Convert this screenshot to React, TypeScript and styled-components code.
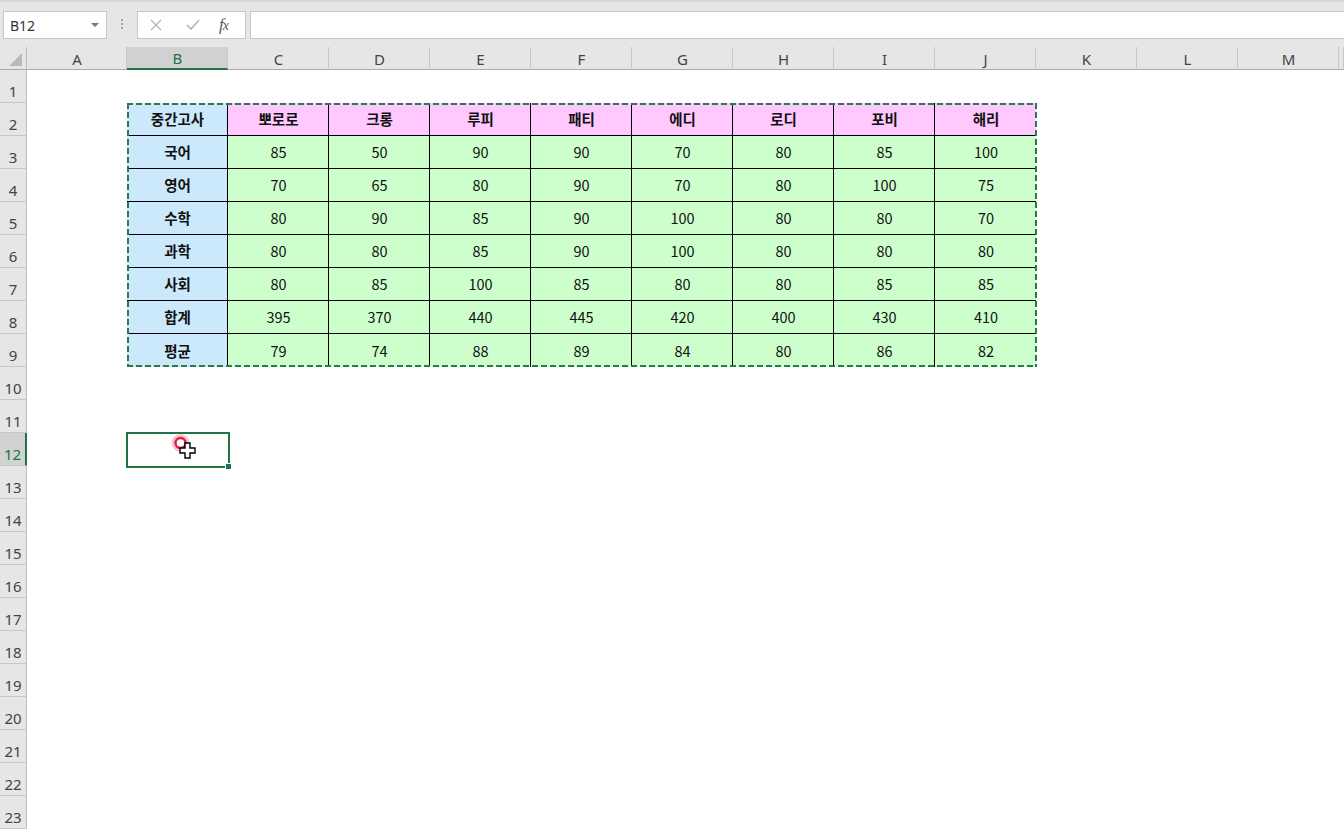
import React from "react";
import styled, { createGlobalStyle, css } from "styled-components";

const GREEN = "#217346";

const GlobalStyle = createGlobalStyle`
  html, body {
    margin: 0;
    padding: 0;
    background: #ffffff;
  }
  body {
    font-family: "Noto Sans", "Liberation Sans", sans-serif;
  }
`;

const Window = styled.div`
  width: 1344px;
  height: 832px;
  overflow: hidden;
  background: #ffffff;
  display: flex;
  flex-direction: column;
`;

const FormulaBar = styled.div`
  height: 47px;
  flex: 0 0 47px;
  display: flex;
  align-items: flex-start;
  padding: 11px 0 0 3px;
  box-sizing: border-box;
  background: #e6e6e6;
  border-top: 2px solid #d9d9d9;
`;

const NameBox = styled.div`
  width: 104px;
  height: 28px;
  box-sizing: border-box;
  margin-top: -2px;
  background: #fff;
  border: 1px solid #c6c6c6;
  display: flex;
  align-items: center;
  justify-content: space-between;
  padding: 0 6px 0 6px;
  font-size: 14px;
  color: #333;
`;

const DropArrow = styled.span`
  width: 0;
  height: 0;
  border-left: 4px solid transparent;
  border-right: 4px solid transparent;
  border-top: 4px solid #777;
  margin-right: 1px;
`;

const Grip = styled.div`
  width: 30px;
  height: 26px;
  margin-top: -2px;
  display: flex;
  flex-direction: column;
  align-items: center;
  justify-content: center;
  gap: 2px;

  span {
    width: 2px;
    height: 2px;
    background: #a6a6a6;
  }
`;

const FxBox = styled.div`
  width: 109px;
  height: 28px;
  margin-top: -2px;
  box-sizing: border-box;
  background: #fff;
  border: 1px solid #c6c6c6;
  display: flex;
  align-items: center;
  padding-left: 12px;
  gap: 20px;
`;

const FxLabel = styled.span`
  font-family: "Liberation Serif", "DejaVu Serif", serif;
  font-style: italic;
  font-size: 17px;
  color: #595959;
  margin-left: -1px;
  letter-spacing: -1px;

  small {
    font-size: 14px;
  }
`;

const FormulaInput = styled.div`
  flex: 1;
  height: 28px;
  margin: -2px 0 0 4px;
  box-sizing: border-box;
  background: #fff;
  border: 1px solid #c6c6c6;
  border-right: none;
`;

const Sheet = styled.div`
  display: grid;
  grid-template-columns: 27px 100px repeat(12, 101px) 1fr;
  grid-template-rows: 23px repeat(23, 33px);
  background: #fff;
`;

const Corner = styled.div`
  background: #e6e6e6;
  border-right: 1px solid #bdbdbd;
  border-bottom: 1px solid #ababab;
  box-sizing: border-box;
  display: flex;
  align-items: flex-end;
  justify-content: flex-end;
  padding: 0 4px 3px 0;

  &::after {
    content: "";
    width: 0;
    height: 0;
    border-left: 13px solid transparent;
    border-bottom: 13px solid #b9b9b9;
  }
`;

const ColHeader = styled.div<{ $active?: boolean }>`
  background: #e6e6e6;
  border-right: 1px solid #c8c8c8;
  border-bottom: 1px solid #ababab;
  box-sizing: border-box;
  display: flex;
  align-items: center;
  justify-content: center;
  font-size: 15px;
  color: #444;
  padding: 1px 0 0 1px;

  ${(p) =>
    p.$active &&
    css`
      background: #d2d2d2;
      color: ${GREEN};
      border-bottom: 2px solid ${GREEN};
    `}
`;

const RowHeader = styled.div<{ $row: number; $active?: boolean }>`
  grid-column: 1;
  grid-row: ${(p) => p.$row + 1};
  background: #e6e6e6;
  border-right: 1px solid #bdbdbd;
  border-bottom: 1px solid #c8c8c8;
  box-sizing: border-box;
  display: flex;
  align-items: flex-end;
  justify-content: center;
  font-size: 15px;
  line-height: 20px;
  color: #444;
  padding-bottom: 1px;

  ${(p) =>
    p.$active &&
    css`
      background: #d2d2d2;
      color: ${GREEN};
      border-right: 2px solid ${GREEN};
    `}
`;

const ScoreTable = styled.div`
  grid-column: 3 / 12;
  grid-row: 3 / 11;
  position: relative;
  display: grid;
  grid-template-columns: repeat(9, 101px);
  grid-template-rows: repeat(8, 33px);
  font-family: "Noto Sans CJK KR", "Noto Sans", sans-serif;
  font-size: 14.5px;
  color: #111;
`;

const Cell = styled.div<{ $kind: "corner" | "name" | "subject" | "score"; $lastCol: boolean; $lastRow: boolean }>`
  box-sizing: border-box;
  display: flex;
  align-items: center;
  justify-content: center;
  border-right: ${(p) => (p.$lastCol ? "none" : "1px solid #000")};
  border-bottom: ${(p) => (p.$lastRow ? "none" : "1px solid #000")};
  font-weight: ${(p) => (p.$kind === "score" ? 400 : 700)};
  background: ${(p) =>
    p.$kind === "name" ? "#ffc8ff" : p.$kind === "score" ? "#ccffcc" : "#cce9fc"};
  padding: 0 0 1px 1px;
`;

const dash = (dir: string) =>
  `repeating-linear-gradient(${dir}, #2b7a4e 0 6px, transparent 6px 9px)`;

const MarchingAnts = styled.div`
  position: absolute;
  inset: 0 -1px 0 0;
  pointer-events: none;
  background:
    ${dash("90deg")} left top / 100% 2px no-repeat,
    ${dash("90deg")} left bottom / 100% 2px no-repeat,
    ${dash("180deg")} left top / 2px 100% no-repeat,
    ${dash("180deg")} right top / 2px 100% no-repeat;
`;

const ActiveCell = styled.div`
  grid-column: 3;
  grid-row: 13;
  position: relative;

  &::before {
    content: "";
    position: absolute;
    inset: -1px -2px -2px -1px;
    border: 2px solid ${GREEN};
  }
`;

const FillHandle = styled.span`
  position: absolute;
  right: -4px;
  bottom: -4px;
  width: 5px;
  height: 5px;
  background: ${GREEN};
  border: 1px solid #fff;
`;

const Pointer = styled.svg`
  position: absolute;
  left: 0;
  top: 0;
  overflow: visible;
  pointer-events: none;
`;

const columns = ["A", "B", "C", "D", "E", "F", "G", "H", "I", "J", "K", "L", "M", ""];

const names = ["뽀로로", "크롱", "루피", "패티", "에디", "로디", "포비", "해리"];

const rows: [string, number[]][] = [
  ["국어", [85, 50, 90, 90, 70, 80, 85, 100]],
  ["영어", [70, 65, 80, 90, 70, 80, 100, 75]],
  ["수학", [80, 90, 85, 90, 100, 80, 80, 70]],
  ["과학", [80, 80, 85, 90, 100, 80, 80, 80]],
  ["사회", [80, 85, 100, 85, 80, 80, 85, 85]],
  ["합계", [395, 370, 440, 445, 420, 400, 430, 410]],
  ["평균", [79, 74, 88, 89, 84, 80, 86, 82]],
];

const App = () => {
  const tableRows: string[][] = [
    ["중간고사", ...names],
    ...rows.map(([label, vals]) => [label, ...vals.map(String)]),
  ];

  return (
    <Window>
      <GlobalStyle />
      <FormulaBar>
        <NameBox>
          B12
          <DropArrow />
        </NameBox>
        <Grip>
          <span />
          <span />
          <span />
        </Grip>
        <FxBox>
          <svg width="12" height="12" viewBox="0 0 12 12">
            <path d="M1 1 L11 11 M11 1 L1 11" stroke="#b3b3b3" strokeWidth="1.3" fill="none" />
          </svg>
          <svg width="14" height="12" viewBox="0 0 14 12" style={{ marginLeft: 4 }}>
            <path d="M1 6 L5 10 L13 1" stroke="#b3b3b3" strokeWidth="1.6" fill="none" />
          </svg>
          <FxLabel>
            f<small>x</small>
          </FxLabel>
        </FxBox>
        <FormulaInput />
      </FormulaBar>

      <Sheet>
        <Corner />
        {columns.map((c, i) => (
          <ColHeader key={i} $active={c === "B"}>
            {c}
          </ColHeader>
        ))}
        {Array.from({ length: 23 }, (_, i) => (
          <RowHeader key={i} $row={i + 1} $active={i + 1 === 12}>
            {i + 1}
          </RowHeader>
        ))}

        <ScoreTable>
          {tableRows.map((r, ri) =>
            r.map((v, ci) => (
              <Cell
                key={`${ri}-${ci}`}
                $kind={ci === 0 ? (ri === 0 ? "corner" : "subject") : ri === 0 ? "name" : "score"}
                $lastCol={ci === r.length - 1}
                $lastRow={ri === tableRows.length - 1}
              >
                {v}
              </Cell>
            ))
          )}
          <MarchingAnts />
        </ScoreTable>

        <ActiveCell>
          <FillHandle />
          <Pointer width="100" height="33" viewBox="0 0 100 33">
            <circle cx="53.5" cy="10" r="7" fill="none" stroke="rgba(225,40,80,0.28)" strokeWidth="4" />
            <circle cx="53.5" cy="10" r="5" fill="#fff" stroke="#dc1f4c" strokeWidth="2.4" />
            <path
              d="M58 10 h5 v5 h5 v5 h-5 v5 h-5 v-5 h-5 v-5 h5 z"
              fill="#fff"
              stroke="#000"
              strokeWidth="1.4"
            />
          </Pointer>
        </ActiveCell>
      </Sheet>
    </Window>
  );
};

export default App;
